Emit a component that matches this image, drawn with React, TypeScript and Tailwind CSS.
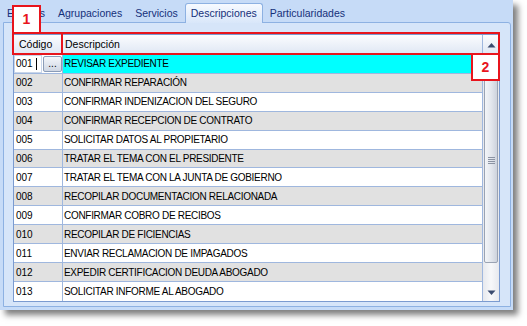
import React from "react";

const rows: [string, string][] = [
  ["001", "REVISAR EXPEDIENTE"],
  ["002", "CONFIRMAR REPARACIÓN"],
  ["003", "CONFIRMAR INDENIZACION DEL SEGURO"],
  ["004", "CONFIRMAR RECEPCION DE CONTRATO"],
  ["005", "SOLICITAR DATOS AL PROPIETARIO"],
  ["006", "TRATAR EL TEMA CON EL PRESIDENTE"],
  ["007", "TRATAR EL TEMA CON LA JUNTA DE GOBIERNO"],
  ["008", "RECOPILAR DOCUMENTACION RELACIONADA"],
  ["009", "CONFIRMAR COBRO DE RECIBOS"],
  ["010", "RECOPILAR DE FICIENCIAS"],
  ["011", "ENVIAR RECLAMACION DE IMPAGADOS"],
  ["012", "EXPEDIR CERTIFICACION DEUDA ABOGADO"],
  ["013", "SOLICITAR INFORME AL ABOGADO"],
];

const tabs = ["Eventos", "Agrupaciones", "Servicios", "Descripciones", "Particularidades"];

export default function App() {
  return (
    <div
      className="w-[527px] h-[326px] bg-white relative overflow-hidden"
      style={{ fontFamily: '"Liberation Sans", Arial, sans-serif' }}
    >
      <div className="w-[513px] h-[310px] bg-[#c6dbf7] shadow-[5px_5px_6px_rgba(0,0,0,0.5)] flex flex-col">
        {/* tab strip */}
        <div className="h-[22px] flex items-end pl-[1px] gap-[1px] text-[10.5px] text-[#15307a]">
          {tabs.map((t) =>
            t === "Descripciones" ? (
              <div
                key={t}
                className="relative z-10 -mb-px h-[20px] px-[5px] pt-[1px] flex items-center border border-b-0 border-[#8db1e2] rounded-t-[3px] bg-gradient-to-b from-[#f7faff] to-[#d9e7fa] text-[#15307a]"
              >
                {t}
              </div>
            ) : (
              <div key={t} className="h-[16px] px-[6px] flex items-center">
                {t}
              </div>
            )
          )}
        </div>
        {/* panel */}
        <div className="ml-[3px] w-[508px] flex-1 mb-[3px] border border-[#8db1e2] rounded-tr-[3px] bg-[#d6e5f9] pt-[11px] pl-[9px]">
          {/* grid */}
          <div className="w-[487px] h-[268px] border border-[#7b9bd0] bg-white flex">
            <div className="w-[468px] flex flex-col">
              {/* header */}
              <div className="h-[20px] flex border-b border-[#9fb7de] bg-gradient-to-b from-[#fbfcfe] to-[#dfe7f4] text-[10.5px] text-black">
                <div className="w-[49px] border-r border-[#9fb7de] flex items-center pl-[5px] pt-[1px]">Código</div>
                <div className="flex-1 flex items-center pl-[2px] pt-[1px]">Descripción</div>
              </div>
              {rows.map(([code, desc], i) => {
                const sel = i === 0;
                const gray = i % 2 === 1;
                const bg = sel ? "bg-[#00ffff]" : gray ? "bg-[#e1e1e1]" : "bg-white";
                return (
                  <div
                    key={code}
                    className={`h-[19px] flex text-[10px] tracking-[-0.3px] text-black ${i < rows.length - 1 ? "border-b border-[#9fb7de]" : ""}`}
                  >
                    {sel ? (
                      <div className="w-[49px] border-r border-[#9fb7de] bg-white flex items-stretch">
                        <div className="w-[28px] flex items-center pl-[1px] border border-[#c9d6ea] bg-white tracking-normal">
                          <span>001</span>
                          <span className="ml-[3px] w-px h-[12px] bg-black" />
                        </div>
                        <div className="w-[19px] my-[1px] ml-[1px] border border-[#8a9cb8] rounded-[2px] bg-gradient-to-b from-[#f4f6fa] to-[#cfd7e4] flex items-end justify-center pb-[2px] text-[10px] leading-none tracking-normal">
                          ...
                        </div>
                      </div>
                    ) : (
                      <div className={`w-[49px] border-r border-[#9fb7de] flex items-center pl-[2px] tracking-normal ${bg}`}>
                        {code}
                      </div>
                    )}
                    <div className={`flex-1 flex items-center pl-[1px] ${bg}`}>{desc}</div>
                  </div>
                );
              })}
            </div>
            {/* scrollbar */}
            <div className="w-[17px] border-l border-[#9fb7de] flex flex-col bg-[#eef0f3]">
              <div className="h-[20px] border-b border-[#9fb7de] bg-gradient-to-b from-[#fbfcfe] to-[#dfe7f4] flex items-center justify-center">
                <svg width="9" height="6" viewBox="0 0 9 6">
                  <path d="M0.5 5.5 L4.5 1 L8.5 5.5 Z" fill="#394a6e" />
                </svg>
              </div>
              <div className="flex-1 flex flex-col px-[1px] pt-[1px] bg-gradient-to-r from-[#e7e9ee] via-[#f7f8fa] to-[#e7e9ee]">
                <div className="h-[207px] rounded-[2px] border border-[#9aa3b3] bg-gradient-to-r from-[#f3f5f8] via-[#e3e7ee] to-[#cdd3dd] flex items-center justify-center">
                  <div className="flex flex-col gap-[1px] mt-[2px]">
                    <div className="w-[7px] h-px bg-[#8b93a3]" />
                    <div className="w-[7px] h-px bg-[#8b93a3]" />
                    <div className="w-[7px] h-px bg-[#8b93a3]" />
                    <div className="w-[7px] h-px bg-[#8b93a3]" />
                  </div>
                </div>
                <div className="flex-1" />
                <div className="h-[17px] flex items-center justify-center">
                  <svg width="9" height="6" viewBox="0 0 9 6">
                    <path d="M0.5 0.5 L4.5 5 L8.5 0.5 Z" fill="#394a6e" />
                  </svg>
                </div>
              </div>
            </div>
          </div>
        </div>
      </div>

      {/* annotations */}
      <div className="absolute left-[12px] top-[32px] w-[51px] h-[23px] border-2 border-[#e8141c]" />
      <div className="absolute left-[61px] top-[32px] w-[439px] h-[23px] border-2 border-[#e8141c]" />
      <div className="absolute left-[12px] top-[5px] w-[29px] h-[29px] border-2 border-[#e8141c] bg-white flex items-center justify-center text-[14px] font-bold text-[#e8141c]">
        1
      </div>
      <div className="absolute left-[471px] top-[53px] w-[29px] h-[28px] border-2 border-[#e8141c] bg-white flex items-center justify-center text-[14px] font-bold text-[#e8141c]">
        2
      </div>
    </div>
  );
}
